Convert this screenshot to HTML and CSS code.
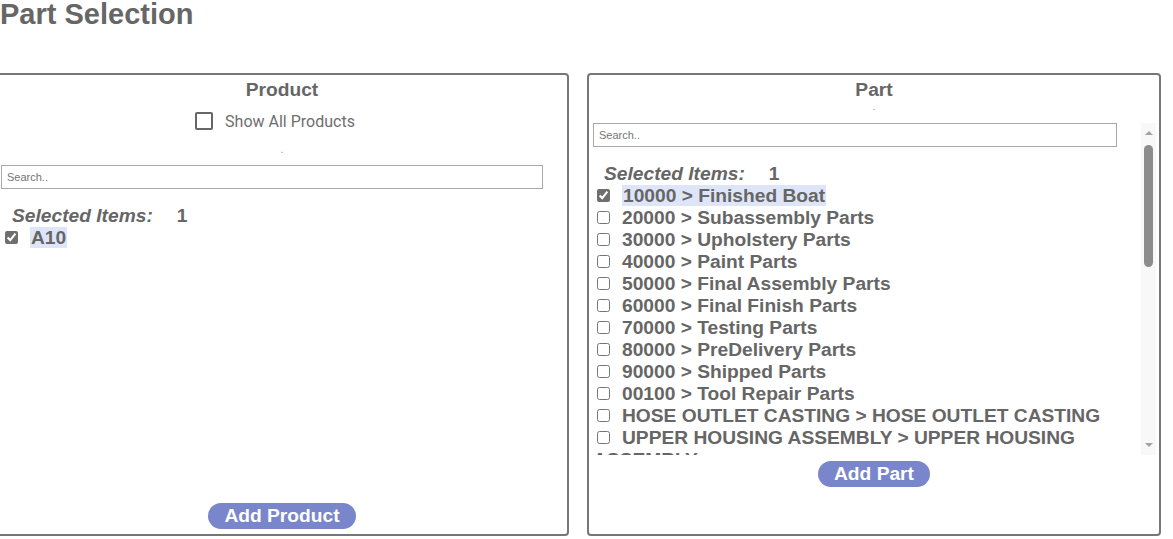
FILE: index.html
```html
<!DOCTYPE html>
<html lang="en">
<head>
  <meta charset="UTF-8" />
  <title>Part Selection</title>
  <link rel="stylesheet" href="styles.css">
</head>
<body>

<h1>Part Selection</h1>

<div class="panels">

  <div class="panel product-panel">
    <div class="panel-title">Product</div>
    <label class="show-all">
      <input type="checkbox" class="big-check">
      <span>Show All Products</span>
    </label>
    <div class="dot">.</div>
    <div class="list-area">
      <div class="list-content">
        <input class="search" type="text" placeholder="Search..">
        <div class="selected-count">Selected Items:<span class="count">1</span></div>
        <div class="item"><input type="checkbox" checked><span class="hl">A10</span></div>
      </div>
    </div>
    <div class="btn-row"><button class="add-btn">Add Product</button></div>
  </div>

  <div class="panel part-panel">
    <div class="panel-title">Part</div>
    <div class="dot">.</div>
    <div class="list-area">
      <div class="list-content">
        <input class="search" type="text" placeholder="Search..">
        <div class="selected-count">Selected Items:<span class="count">1</span></div>
        <div class="item"><input type="checkbox" checked><span class="hl">10000 &gt; Finished Boat</span></div>
        <div class="item"><input type="checkbox"><span>20000 &gt; Subassembly Parts</span></div>
        <div class="item"><input type="checkbox"><span>30000 &gt; Upholstery Parts</span></div>
        <div class="item"><input type="checkbox"><span>40000 &gt; Paint Parts</span></div>
        <div class="item"><input type="checkbox"><span>50000 &gt; Final Assembly Parts</span></div>
        <div class="item"><input type="checkbox"><span>60000 &gt; Final Finish Parts</span></div>
        <div class="item"><input type="checkbox"><span>70000 &gt; Testing Parts</span></div>
        <div class="item"><input type="checkbox"><span>80000 &gt; PreDelivery Parts</span></div>
        <div class="item"><input type="checkbox"><span>90000 &gt; Shipped Parts</span></div>
        <div class="item"><input type="checkbox"><span>00100 &gt; Tool Repair Parts</span></div>
        <div class="item"><input type="checkbox"><span>HOSE OUTLET CASTING &gt; HOSE OUTLET CASTING</span></div>
        <div class="item"><input type="checkbox"><span>UPPER HOUSING ASSEMBLY &gt; UPPER HOUSING ASSEMBLY</span></div>
      </div>
      <div class="scrollbar">
        <div class="arrow-up"></div>
        <div class="thumb"></div>
        <div class="track-space"></div>
        <div class="arrow-down"></div>
      </div>
    </div>
    <div class="btn-row"><button class="add-btn">Add Part</button></div>
  </div>

</div>

</body>
</html>
```

FILE: styles.css
```css
html, body {
  margin: 0;
  background-color: #fff;
  color: #666;
  font-family: "Liberation Sans", Arial, sans-serif;
  overflow: hidden;
}

h1 {
  margin: -3px 0 42px 0;
  font-size: 29px;
  line-height: 34px;
  font-weight: bold;
  color: #666;
}

.panels {
  display: flex;
  gap: 18px;
  margin: 0 12px 0 -5px;
}

.panel {
  flex: 1;
  height: 463px;
  box-sizing: border-box;
  border: 2px solid #777;
  border-radius: 4px;
  display: flex;
  flex-direction: column;
}

.panel-title {
  margin-top: 4px;
  text-align: center;
  font-size: 19.2px;
  line-height: 22px;
  font-weight: bold;
}

.show-all {
  margin-top: 8px;
  height: 24px;
  padding-right: 14px;
  display: flex;
  justify-content: center;
  align-items: center;
  gap: 12px;
  font-family: Roboto, "Liberation Sans", sans-serif;
  font-size: 16px;
  color: #6e6e6e;
}

.big-check {
  appearance: none;
  margin: 0;
  width: 18px;
  height: 18px;
  box-sizing: border-box;
  border: 2px solid #666;
  border-radius: 2px;
  background: #fff;
}

.dot {
  font-size: 11px;
  line-height: 10px;
  text-align: center;
  color: #999;
}

.product-panel .dot {
  margin: 11px 0 11px 0;
}

.part-panel .dot {
  margin: 0 0 12px 0;
}

.list-area {
  display: flex;
  overflow: hidden;
}

.product-panel .list-area {
  height: 334px;
}

.part-panel .list-area {
  height: 332px;
  margin-right: 3px;
}

.list-content {
  flex: 1;
  min-width: 0;
  overflow: hidden;
}

.search {
  display: block;
  width: 95%;
  height: 24px;
  box-sizing: border-box;
  margin: 0 0 0 4px;
  padding: 0 5px;
  border: 1px solid #a9a9a9;
  font-family: "Liberation Sans", Arial, sans-serif;
  font-size: 11px;
  color: #333;
  outline: none;
}

.search::placeholder {
  color: #757575;
}

.selected-count {
  margin-top: 16px;
  padding-left: 15px;
  font-size: 19.2px;
  line-height: 22px;
  font-weight: bold;
  font-style: italic;
}

.count {
  font-style: normal;
  margin-left: 24px;
}

.item {
  padding-left: 4px;
  font-size: 19.2px;
  line-height: 22px;
  font-weight: bold;
}

.item input {
  width: 13px;
  height: 13px;
  margin: 0 12px 0 4px;
  accent-color: #6f6f6f;
}

.hl {
  background-color: #dfe5f9;
  padding: 0 1px;
}

.scrollbar {
  width: 15px;
  background-color: #f8f8f8;
  display: flex;
  flex-direction: column;
  align-items: center;
  padding: 8px 0;
  box-sizing: border-box;
}

.arrow-up {
  width: 0;
  height: 0;
  border-left: 4px solid transparent;
  border-right: 4px solid transparent;
  border-bottom: 4px solid #a3a3a3;
}

.arrow-down {
  width: 0;
  height: 0;
  border-left: 4px solid transparent;
  border-right: 4px solid transparent;
  border-top: 4px solid #a3a3a3;
}

.thumb {
  margin-top: 10px;
  width: 9px;
  height: 122px;
  border-radius: 5px;
  background-color: #8c8c8c;
}

.track-space {
  flex: 1;
}

.btn-row {
  text-align: center;
}

.product-panel .btn-row {
  margin-top: 4px;
}

.part-panel .btn-row {
  margin-top: 6px;
}

.add-btn {
  border: none;
  border-radius: 14px;
  background-color: #7986cb;
  color: #fff;
  font-family: "Liberation Sans", Arial, sans-serif;
  font-size: 19.2px;
  font-weight: bold;
  line-height: 22px;
  padding: 2px 16px;
}
```
